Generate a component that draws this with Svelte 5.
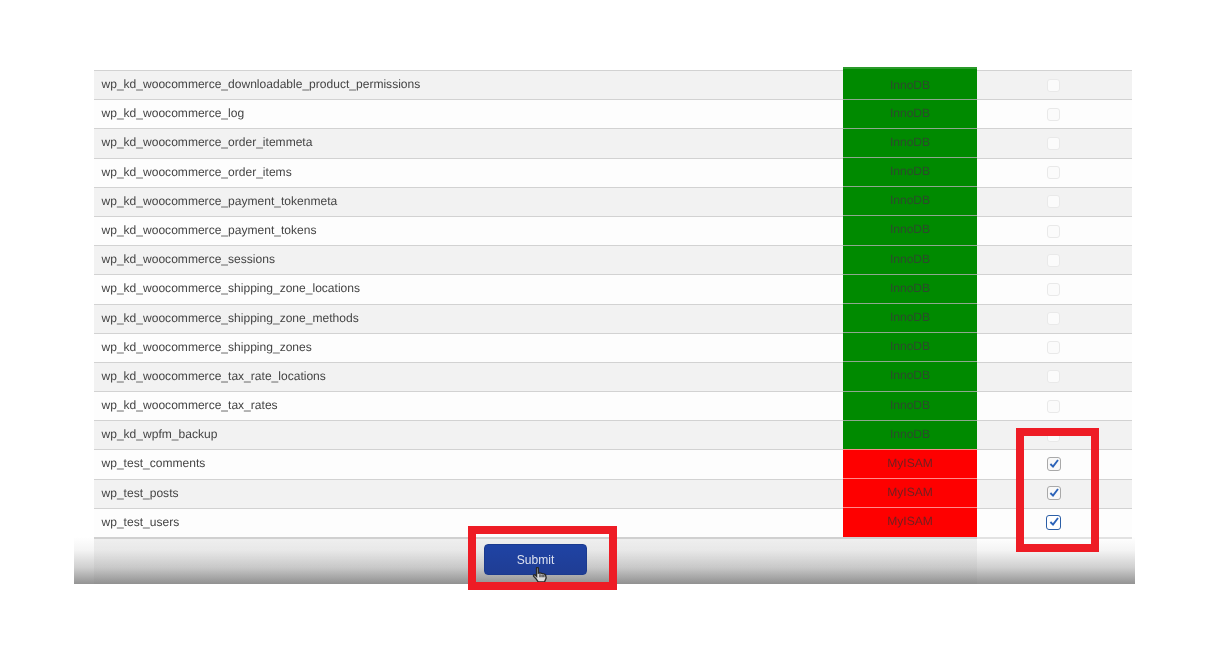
<script>
  const tables = [
    'wp_kd_woocommerce_downloadable_product_permissions',
    'wp_kd_woocommerce_log',
    'wp_kd_woocommerce_order_itemmeta',
    'wp_kd_woocommerce_order_items',
    'wp_kd_woocommerce_payment_tokenmeta',
    'wp_kd_woocommerce_payment_tokens',
    'wp_kd_woocommerce_sessions',
    'wp_kd_woocommerce_shipping_zone_locations',
    'wp_kd_woocommerce_shipping_zone_methods',
    'wp_kd_woocommerce_shipping_zones',
    'wp_kd_woocommerce_tax_rate_locations',
    'wp_kd_woocommerce_tax_rates',
    'wp_kd_wpfm_backup',
    'wp_test_comments',
    'wp_test_posts',
    'wp_test_users'
  ];
  const rows = tables.map((name) => {
    const myisam = name.startsWith('wp_test');
    return { name, engine: myisam ? 'MyISAM' : 'InnoDB', checked: myisam };
  });
</script>

<main>
  <div class="table">
    {#each rows as row, i}
      <div class="row" class:odd={i % 2 === 0}>
        <div class="name">{row.name}</div>
        <div class="engine" class:red={row.checked} class:first={i === 0}>{row.engine}</div>
        <div class="check">
          <span class="box" class:checked={row.checked} class:focus={i === rows.length - 1}>
            {#if row.checked}
              <svg viewBox="0 0 12 12" width="12" height="12"><path d="M2.4 6 L5 8.6 L10 2" fill="none" stroke="#2a62b8" stroke-width="1.9"/></svg>
            {/if}
          </span>
        </div>
      </div>
    {/each}
  </div>

  <div class="footer">
    <div class="submit-cell">
      <button>Submit</button>
      <svg class="cursor" viewBox="0 0 14 14" width="16" height="16">
        <path d="M4 1.2 C4 .2 5.6 .2 5.6 1.2 L5.6 5.4 L7 5.2 L8.6 5.6 L10.4 6 L11.8 6.8 L12.4 9.6 L11 13 L5.4 13 L3.6 10.4 L1.4 8 C1 7 2.2 6.4 3 7.2 L4 8.2 Z" fill="#dcdcdc" stroke="#2a2a2a" stroke-width="1.2"/>
        <path d="M7 6.4 V9 M8.8 6.6 V9 M10.4 7 V9" stroke="#2a2a2a" stroke-width="1"/>
      </svg>
    </div>
    <div class="blank"></div>
  </div>

  <div class="mark mark-checks"></div>
  <div class="mark mark-submit"></div>
</main>

<style>
  :global(body) {
    margin: 0;
    background: #fff;
  }

  main {
    position: relative;
    width: 1220px;
    height: 657px;
    padding: 70px 0 0 94px;
    box-sizing: border-box;
    font-family: "Liberation Sans", Arial, sans-serif;
    font-size: 12.05px;
    text-rendering: geometricPrecision;
    color: #444;
    overflow: hidden;
  }

  .table {
    width: 1038px;
    filter: blur(0.35px);
  }

  .row {
    display: grid;
    grid-template-columns: 749px 134px 155px;
    height: 29.19px;
    box-sizing: border-box;
    border-top: 1.5px solid #d2d2d2;
    background: #fdfdfd;
  }

  .row.odd {
    background: #f2f2f2;
  }

  .name {
    padding-left: 7.5px;
    line-height: 27px;
  }

  .engine {
    position: relative;
    background: #008a00;
    color: #2c4a2c;
    text-align: center;
    line-height: 27px;
    margin-top: -1.5px;
    border-top: 1px solid #8fa88f;
  }

  .engine.first {
    margin-top: -4px;
    padding-top: 2.5px;
    border-top: 2px solid #2a9a2a;
  }

  .engine.red {
    background: #fe0000;
    color: #702020;
    border-top-color: #ff8a8a;
  }

  .check {
    display: flex;
    justify-content: center;
    align-items: center;
    padding-right: 2px;
  }

  .box {
    display: flex;
    align-items: center;
    justify-content: center;
    width: 13px;
    height: 13px;
    box-sizing: border-box;
    border: 1.5px solid #e9e9e9;
    border-radius: 3px;
    background: #fbfbfb;
  }

  .box.checked {
    width: 14px;
    height: 14px;
    margin-top: -1px;
    border: 1.5px solid #a9a9a9;
    background: #f8f8f8;
  }

  .box.focus {
    width: 15px;
    height: 15px;
    border: 1.5px solid #2b5ea6;
    background: #fff;
  }

  .footer {
    display: grid;
    grid-template-columns: 903px 158px;
    width: 1061px;
    height: 47px;
    margin-left: -20px;
    background: linear-gradient(#ffffff, #f4f4f4 28%, #cfcfcf 65%, #939393);
  }

  .submit-cell {
    position: relative;
    margin-left: 20px;
    border-top: 2px solid #d0d0d0;
    background: linear-gradient(rgba(0, 0, 0, 0.06), rgba(0, 0, 0, 0.02));
    padding: 5px 0 0 390px;
  }

  .blank {
    margin-right: 3px;
    border-top: 2px solid #e2e2e2;
  }

  button {
    display: block;
    width: 103px;
    height: 31px;
    padding: 0;
    border: 1px solid #1b3a8e;
    border-radius: 4px;
    background: linear-gradient(#1f43a4, #1f3d94);
    color: #dde2f0;
    font: inherit;
    filter: blur(0.3px);
  }

  .cursor {
    position: absolute;
    left: 438px;
    top: 28px;
  }

  .mark {
    position: absolute;
    box-sizing: border-box;
    border: 8px solid #ee1c25;
  }

  .mark-checks {
    left: 1016px;
    top: 428px;
    width: 83px;
    height: 124px;
  }

  .mark-submit {
    left: 468px;
    top: 526px;
    width: 149px;
    height: 64px;
  }
</style>
